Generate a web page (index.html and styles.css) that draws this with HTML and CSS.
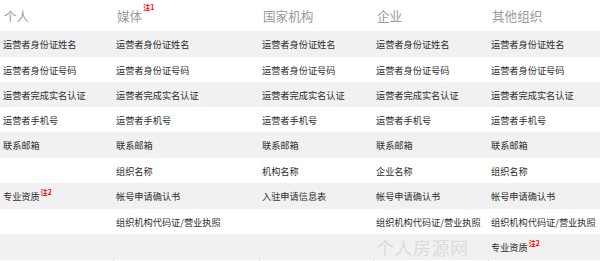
FILE: index.html
```html
<!DOCTYPE html>
<html lang="zh">
<head>
<meta charset="utf-8">
<link rel="stylesheet" href="styles.css">
</head>
<body>
<div class="wrap">
<table class="tbl">
  <colgroup>
    <col class="c1"><col class="c2"><col class="c3"><col class="c4"><col class="c5">
  </colgroup>
  <thead>
    <tr class="head">
      <th>个人</th>
      <th>媒体<sup class="note">注1</sup></th>
      <th>国家机构</th>
      <th>企业</th>
      <th>其他组织</th>
    </tr>
  </thead>
  <tbody>
    <tr class="r gray h26">
      <td>运营者身份证姓名</td><td>运营者身份证姓名</td><td>运营者身份证姓名</td><td>运营者身份证姓名</td><td>运营者身份证姓名</td>
    </tr>
    <tr class="r h25">
      <td>运营者身份证号码</td><td>运营者身份证号码</td><td>运营者身份证号码</td><td>运营者身份证号码</td><td>运营者身份证号码</td>
    </tr>
    <tr class="r gray h25">
      <td>运营者完成实名认证</td><td>运营者完成实名认证</td><td>运营者完成实名认证</td><td>运营者完成实名认证</td><td>运营者完成实名认证</td>
    </tr>
    <tr class="r h25">
      <td>运营者手机号</td><td>运营者手机号</td><td>运营者手机号</td><td>运营者手机号</td><td>运营者手机号</td>
    </tr>
    <tr class="r gray h26">
      <td>联系邮箱</td><td>联系邮箱</td><td>联系邮箱</td><td>联系邮箱</td><td>联系邮箱</td>
    </tr>
    <tr class="r h25">
      <td></td><td>组织名称</td><td>机构名称</td><td>企业名称</td><td>组织名称</td>
    </tr>
    <tr class="r gray h26">
      <td>专业资质<sup class="note">注2</sup></td><td>帐号申请确认书</td><td>入驻申请信息表</td><td>帐号申请确认书</td><td>帐号申请确认书</td>
    </tr>
    <tr class="r h25">
      <td></td><td>组织机构代码证/营业执照</td><td></td><td>组织机构代码证/营业执照</td><td>组织机构代码证/营业执照</td>
    </tr>
    <tr class="r gray h23">
      <td></td><td></td><td></td><td class="wm-cell"><span class="wm">个人房源网</span></td><td>专业资质<sup class="note">注2</sup></td>
    </tr>
    <tr class="r tail">
      <td></td><td class="bl"></td><td class="bl"></td><td class="bl"></td><td class="bl"></td>
    </tr>
  </tbody>
</table>
</div>
</body>
</html>
```

FILE: styles.css
```css
html, body {
  margin: 0;
  padding: 0;
  background: #ffffff;
}
body {
  font-family: "Noto Sans CJK SC", "Noto Sans", sans-serif;
  width: 600px;
  height: 261px;
  overflow: hidden;
}
.wrap {
  width: 600px;
}
.tbl {
  width: 600px;
  border-collapse: collapse;
  table-layout: fixed;
}
.c1 { width: 113px; }
.c2 { width: 146px; }
.c3 { width: 114px; }
.c4 { width: 115px; }
.c5 { width: 112px; }
.head th {
  height: 31px;
  padding: 0 0 0 4px;
  text-align: left;
  font-weight: normal;
  font-size: 12.6px;
  color: #9a9a9a;
  vertical-align: middle;
  white-space: nowrap;
}
.r td {
  padding: 0 0 0 3px;
  font-size: 9.2px;
  color: #2e2e2e;
  vertical-align: middle;
  white-space: nowrap;
}
.gray td { background: #f1f1f1; }
.h26 td { height: 26px; }
.h25 td { height: 25px; }
.h23 td { height: 23px; }
.tail td { height: 6px; }
.tail td.bl { border-left: 1px solid #d6d6d6; }
.note {
  font-size: 7px;
  font-weight: bold;
  color: #ff0000;
  vertical-align: top;
  position: relative;
  top: -2px;
  margin-left: 1px;
}
.head .note { top: -4px; }
.wm {
  font-size: 18px;
  color: #dcdcdc;
  letter-spacing: 0.5px;
}
```
